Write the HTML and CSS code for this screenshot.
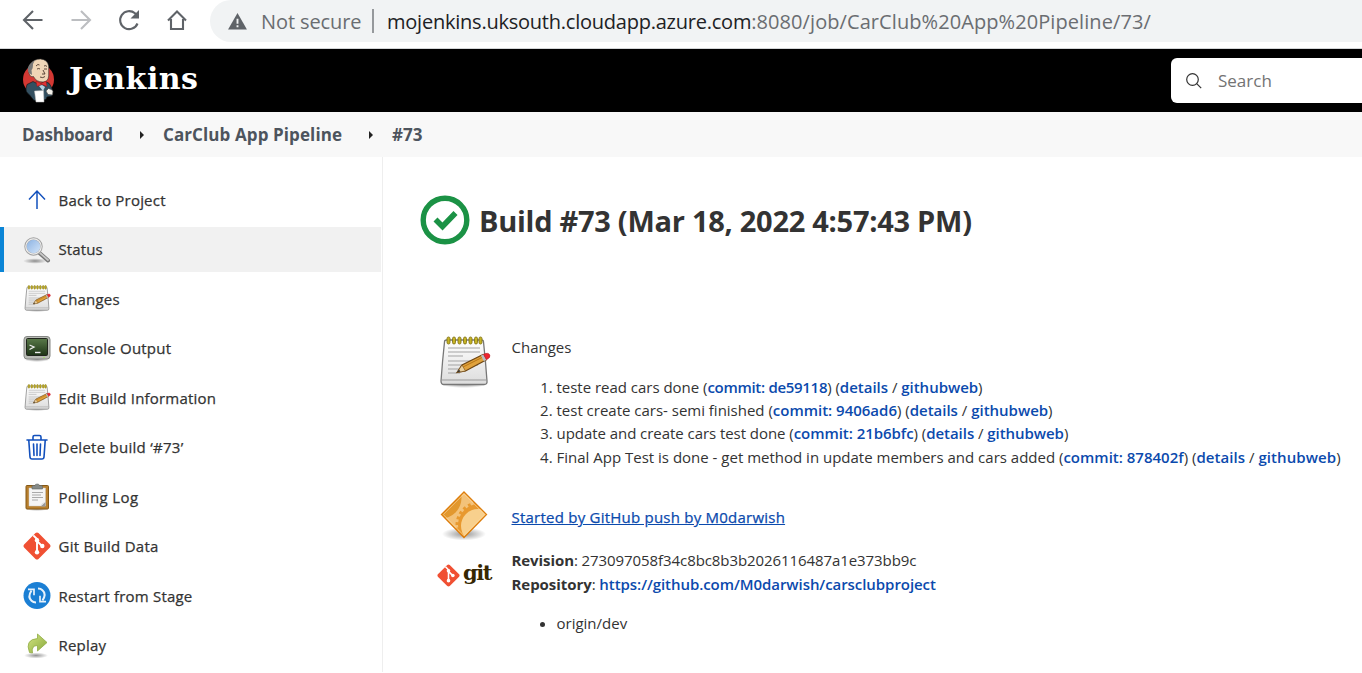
FILE: index.html
```html
<!DOCTYPE html>
<html lang="en">
<head>
<meta charset="utf-8">
<title>CarClub App Pipeline #73 [Jenkins]</title>
<link rel="stylesheet" href="styles.css">
</head>
<body>
<svg class="defs" width="0" height="0" aria-hidden="true">
  <defs>
    <linearGradient id="paper" x1="0" y1="0" x2="0" y2="1"><stop offset="0" stop-color="#fff"/><stop offset="1" stop-color="#dcdcdc"/></linearGradient>
    <linearGradient id="glass" x1="0" y1="0" x2="1" y2="1"><stop offset="0" stop-color="#86aee0"/><stop offset="1" stop-color="#d9e9fb"/></linearGradient>
    <linearGradient id="screen" x1="0" y1="0" x2="0" y2="1"><stop offset="0" stop-color="#5a7a4a"/><stop offset="1" stop-color="#1d3316"/></linearGradient>
    <linearGradient id="leaf" x1="0" y1="0" x2="1" y2="1"><stop offset="0" stop-color="#d5e583"/><stop offset="1" stop-color="#86a83a"/></linearGradient>
    <radialGradient id="shade"><stop offset="0" stop-color="#000" stop-opacity=".42"/><stop offset="1" stop-color="#000" stop-opacity="0"/></radialGradient>
    <clipPath id="diamond"><path d="M25 1l22.500 22.500L25 46.500 2.500 23.500z"/></clipPath>
    <symbol id="notepad" viewBox="0 0 52 52">
      <ellipse cx="25" cy="48" rx="24" ry="4" fill="url(#shade)"/>
      <path d="M5.500 6Q3.500 24 2 45q0 3.500 3 3.500h40q3.500 0 3-3.500Q46.500 24 44.500 6q0-2-2-2h-35q-2 0-2 2z" fill="url(#paper)" stroke="#777" stroke-width="1.300"/>
      <path d="M3 44h44" stroke="#999"/>
      <path d="M9 12h32M9 16h32M9 20h15M9 25h32M9 29h30M9 33h20M9 37h12" stroke="#a3a3a3"/>
      <g fill="#c6b323" stroke="#85761a" stroke-width=".9"><rect x="8" y="1" width="3" height="7" rx="1.500"/><rect x="13.500" y="1" width="3" height="7" rx="1.500"/><rect x="19" y="1" width="3" height="7" rx="1.500"/><rect x="24.500" y="1" width="3" height="7" rx="1.500"/><rect x="30" y="1" width="3" height="7" rx="1.500"/><rect x="35.500" y="1" width="3" height="7" rx="1.500"/><rect x="40" y="1" width="3" height="7" rx="1.500"/></g>
      <path d="M18 36.500l5-7.500 21-10.500 3 5.500-20.500 11z" fill="#e0a23c" stroke="#6d4512" stroke-width="1.200"/>
      <path d="M18 36.500l5-7.500 3.500 6z" fill="#e9cf9d" stroke="#6d4512" stroke-width=".6"/><path d="M18 36.500l2-3 1.500 2z" fill="#333"/>
      <path d="M24 31l21-10.500" stroke="#b97715"/>
      <path d="M42 19.500l2.500-1.200 3 5.500-2.700 1.400z" fill="#b9bec4"/>
      <path d="M44.500 18.300q5-2.300 6.300.8 1 2.500-3.300 4.700z" fill="#ee2430" stroke="#b31a20" stroke-width=".6"/>
    </symbol>
    <symbol id="git-mark" viewBox="0 0 28 28">
      <path d="M14 .5q.9 0 1.500.6L26.900 12.500q1.200 1.500 0 3L15.500 26.900q-1.500 1.200-3 0L1.100 15.500q-1.200-1.500 0-3L12.500 1.100Q13.100.5 14 .5z" fill="#f05033"/>
      <path d="M10.300 3.300L14 7v14M14 9l5.500 5.500" fill="none" stroke="#fff" stroke-width="1.900"/>
      <circle cx="14" cy="8.300" r="2.200" fill="#fff"/><circle cx="19.300" cy="14" r="2.200" fill="#fff"/><circle cx="14" cy="20.300" r="2.200" fill="#fff"/>
    </symbol>
  </defs>
</svg>

<div class="toolbar">
  <svg class="nav-icon" viewBox="0 0 24 24"><path d="M21.500 12H3M12 3l-9 9 9 9"/></svg>
  <svg class="nav-icon nav-icon--off" viewBox="0 0 24 24"><path d="M2.500 12H21M12 3l9 9-9 9"/></svg>
  <svg class="nav-icon" viewBox="0 0 24 24"><path d="M20.500 15.500A9 9 0 1 1 18 5.300L20 7.500"/><path class="solid" d="M22 2v8.500h-8.500z"/></svg>
  <svg class="nav-icon" viewBox="0 0 24 24"><path d="M3 12.500L12 3.500l9 9M6 11v10h12V11"/></svg>
  <div class="omnibox">
    <svg class="warn" viewBox="0 0 20 18"><path d="M10 0l10 17.500H0z" fill="#5f6368"/><path d="M10 6v5.500M10 13v2.200" stroke="#f1f3f4" stroke-width="2"/></svg>
    <span class="insecure">Not secure</span>
    <span class="bar"></span>
    <span class="url"><span class="host">mojenkins.uksouth.cloudapp.azure.com</span><span class="path">:8080/job/CarClub%20App%20Pipeline/73/</span></span>
  </div>
</div>

<header class="header">
  <svg class="butler" viewBox="0 0 33 45">
    <circle cx="16.500" cy="21.500" r="15.500" fill="#d33833"/>
    <path d="M5 26.500l6-3 6 3 6-3q5 1 6 5l2 4.500-1 5-5 1-1 2.500-12 1-4-5q-5-4-4-7z" fill="#335061" stroke="#111" stroke-width=".6"/>
    <path d="M7 15Q5 10 8.500 6 12 1 18.500 1q7 .5 8.200 7v10q-.7 6-5.700 6-7 0-9.500-5.500-3.500 1-4.500-3.500z" fill="#f0d6b7" stroke="#333" stroke-width=".6"/>
    <path d="M7 15Q4 9 9 5l4-3-2 4q0 5-1.500 6L10 17z" fill="#777"/>
    <path d="M14 8q2-2.500 3.500-1M22 8q2-1 3 .5M15 11q2-1 3 0M22 11h3M21 12l2 4h-3M18 19q3 1.500 5-.5" fill="none" stroke="#49352a" stroke-width=".9"/>
    <path d="M14 23l5 2.500 5-2.500 1 5.500-5-2-5 2z" fill="#e33234" stroke="#801414" stroke-width=".4"/>
    <path d="M17 28l3-1 3 2-2 4z" fill="#b9d3e2"/>
    <path d="M12.500 33l9-.5.5 11.500h-8z" fill="#fff" stroke="#bbb" stroke-width=".5"/>
    <path d="M24 33l2.500-2.500q3 .5 4.500 2.500l-.5 4-4.500-.5z" fill="#f3f0e9" stroke="#444" stroke-width=".6"/>
  </svg>
  <span class="wordmark">Jenkins</span>
  <div class="search">
    <svg viewBox="0 0 16 16"><circle cx="6.500" cy="6.500" r="5.800"/><path d="M10.700 10.700l4.500 4.500"/></svg>
    <span>Search</span>
  </div>
</header>

<nav class="crumbs">
  <a class="c1">Dashboard</a><i class="caret"></i><a class="c2">CarClub App Pipeline</a><i class="caret"></i><a class="c3">#73</a>
</nav>

<div class="page">
  <aside class="side">
    <a class="task"><svg viewBox="0 0 28 28"><path d="M14 23V5M6 13.500L14 5l8 8.500" fill="none" stroke="#1250bd" stroke-width="1.500"/></svg><span class="t1">Back to Project</span></a>
    <a class="task task--on"><svg viewBox="0 0 28 28"><ellipse cx="12" cy="25" rx="12" ry="2.800" fill="url(#shade)"/><path d="M16.500 17l8.500 7.500" stroke="#777" stroke-width="4" stroke-linecap="round"/><path d="M17 17l8 7" stroke="#c7c7c7" stroke-width="1.800" stroke-linecap="round"/><circle cx="10.500" cy="10.500" r="8" fill="url(#glass)" stroke="#a0a0a0" stroke-width="2.400"/><circle cx="10.500" cy="10.500" r="7.700" fill="none" stroke="#eee" stroke-width="1.200"/></svg><span class="t2">Status</span></a>
    <a class="task"><svg viewBox="0 0 28 28"><use href="#notepad" x="1" y="0" width="27" height="27"/></svg><span class="t3">Changes</span></a>
    <a class="task"><svg viewBox="0 0 28 28"><ellipse cx="14" cy="25.500" rx="13" ry="2.500" fill="url(#shade)"/><rect x="1" y="2.500" width="26" height="22.500" rx="3" fill="#b9bbb5" stroke="#858784"/><rect x="3.500" y="4.500" width="21" height="17" rx="1" fill="url(#screen)" stroke="#20251d"/><path d="M6.500 11l4.500 2-4.500 2.500" fill="none" stroke="#eee" stroke-width="1.300"/><path d="M12 18.500h5.500" stroke="#eee" stroke-width="1.400"/><circle cx="21" cy="23.500" r=".8" fill="#9be35d"/></svg><span class="t4">Console Output</span></a>
    <a class="task"><svg viewBox="0 0 28 28"><use href="#notepad" x="1" y="0" width="27" height="27"/></svg><span class="t5">Edit Build Information</span></a>
    <a class="task"><svg viewBox="0 0 28 28"><path d="M4 7h20M10 6.500V4q0-1.500 1.500-1.500h5Q18 2.500 18 4v2.500M5.800 7.500L7 24q.2 2 2 2h10q1.800 0 2-2l1.200-16.500M10.500 11l.5 11.500M14 11v11.500M17.500 11l-.5 11.500" fill="none" stroke="#1250bd" stroke-width="1.600" stroke-linecap="round"/></svg><span class="t6">Delete build ‘#73’</span></a>
    <a class="task"><svg viewBox="0 0 28 28"><ellipse cx="14" cy="26" rx="12" ry="2" fill="url(#shade)"/><rect x="3" y="2.500" width="22.500" height="23.500" rx="1" fill="#b87f2d" stroke="#845817"/><path d="M6 5h16.500v18H6z" fill="#f5f5f5" stroke="#ccc" stroke-width=".5"/><path d="M22.500 19l-5 4.500h5z" fill="#999"/><path d="M17.500 23q1-3.500 5-4l-5 4z" fill="#ddd"/><path d="M9 9.500h11M9 12h9M9 14.500h11M9 17h6" stroke="#aaa"/><path d="M9 6V3.500q0-1 1.500-1H12q0-1.500 2.200-1.500t2.300 1.500H18q1.500 0 1.500 1V6z" fill="#858a88" stroke="#606563" stroke-width=".6"/></svg><span class="t7">Polling Log</span></a>
    <a class="task"><svg viewBox="0 0 28 28"><use href="#git-mark" width="28" height="28"/></svg><span class="t8">Git Build Data</span></a>
    <a class="task"><svg viewBox="0 0 28 28"><circle cx="14" cy="13.500" r="13.500" fill="#1b7fd4"/><path d="M8.500 8.500Q4.300 15 8.500 18.800q1.700 1.700 4.500 1.700M19.500 18.500q4.200-6.500 0-10.300-1.700-1.700-4.500-1.700" fill="none" stroke="#e8f2fb" stroke-width="2"/><path d="M5 7.300h6v6M23 19.700h-6v-6" fill="none" stroke="#e8f2fb" stroke-width="1.700"/></svg><span class="t9">Restart from Stage</span></a>
    <a class="task"><svg viewBox="0 0 28 28"><ellipse cx="13" cy="24.500" rx="12" ry="3" fill="url(#shade)"/><path d="M6.500 21.500Q1.500 8.500 14.500 7.500V3l9.500 8.500-9.500 8.500V14.500Q8 14.500 9.500 22z" fill="url(#leaf)" stroke="#91ac42" stroke-width=".8"/></svg><span class="t10">Replay</span></a>
  </aside>

  <main class="main">
    <h1 class="title">
      <svg viewBox="0 0 50 50"><circle cx="25" cy="25" r="21.800" fill="none" stroke="#1b9245" stroke-width="5.400"/><path d="M15.500 24.500l7 7L35.500 18" fill="none" stroke="#1b9245" stroke-width="5.600"/></svg>
      <span>Build #73 (Mar 18, 2022 4:57:43 PM)</span>
    </h1>
    <section class="row row--changes">
      <svg class="pad" viewBox="0 0 52 52"><use href="#notepad" width="52" height="52"/></svg>
      <div>
        <p class="label">Changes</p>
        <ol class="log">
          <li class="l1">teste read cars done (<a class="sha">commit: de59118</a>) (<a>details</a> / <a>githubweb</a>)</li>
          <li class="l2">test create cars- semi finished (<a class="sha">commit: 9406ad6</a>) (<a>details</a> / <a>githubweb</a>)</li>
          <li class="l3">update and create cars test done (<a class="sha">commit: 21b6bfc</a>) (<a>details</a> / <a>githubweb</a>)</li>
          <li class="l4">Final App Test is done - get method in update members and cars added (<a class="sha">commit: 878402f</a>) (<a>details</a> / <a>githubweb</a>)</li>
        </ol>
      </div>
    </section>
    <section class="row row--cause">
      <svg class="cause" viewBox="0 0 50 50"><ellipse cx="25" cy="43" rx="22" ry="6.500" fill="url(#shade)"/>
        <g clip-path="url(#diamond)">
          <path d="M0 0h50v48H0z" fill="#f3c27a"/>
          <circle cx="2" cy="7" r="20.500" fill="#e2982f"/>
          <circle cx="40" cy="34" r="21" fill="#e8992f"/>
          <circle cx="40" cy="34" r="21.500" fill="none" stroke="#e8992f" stroke-width="4" stroke-dasharray="2.800 2.800"/>
          <circle cx="39" cy="35" r="17" fill="#f8d08d"/>
        </g>
        <path d="M25 1l22.500 22.500L25 46.500 2.500 23.500z" fill="none" stroke="#dd7d0c" stroke-width="1.300"/><path d="M25 2.800L45.700 23.500 25 44.700 4.300 23.500z" fill="none" stroke="#ffdda6" stroke-opacity=".6"/></svg>
      <a class="cause-link">Started by GitHub push by M0darwish</a>
    </section>
    <section class="row row--git">
      <div class="git-logo"><svg viewBox="0 0 28 28"><use href="#git-mark" width="28" height="28"/></svg><b>git</b></div>
      <div>
        <p class="rev"><b>Revision</b>: 273097058f34c8bc8b3b2026116487a1e373bb9c</p>
        <p class="repo"><b>Repository</b>: <a>https://github.com/M0darwish/carsclubproject</a></p>
        <ul class="branches"><li>origin/dev</li></ul>
      </div>
    </section>
  </main>
</div>
</body>
</html>
```
FILE: styles.css
```css
* { box-sizing: border-box; }
body { margin: 0; height: 673px; overflow: hidden; background: #fff; color: #333; font-family: "Open Sans", "Noto Sans", sans-serif; font-size: 15px; white-space: nowrap; }
p, h1, ol, ul { margin: 0; }
svg { display: block; flex: none; }
.defs { position: absolute; }

.toolbar { display: flex; height: 49px; padding-left: 21px; border-bottom: 1px solid #d4d6d8; }
.nav-icon { width: 24px; height: 24px; margin: 8px 24px 0 0; fill: none; stroke: #5f6368; stroke-width: 2.1; }
.nav-icon .solid { fill: #5f6368; stroke: none; }
.nav-icon--off { stroke: #bcbec1; }
.omnibox { display: flex; align-items: center; flex: 1; height: 42px; margin-left: -3px; padding-left: 18px; background: #f1f3f4; border-radius: 21px 0 0 21px; font-size: 20px; color: #6a6d71; }
.warn { width: 19px; height: 17px; }
.insecure { margin-left: 14px; width: 100px; letter-spacing: -.1px; }
.bar { width: 2px; height: 24px; margin: 0 13px 0 11px; background: #96999c; }
.host { color: #202124; letter-spacing: -.23px; }
.path { letter-spacing: .08px; }

.header { display: flex; align-items: center; height: 63px; padding-left: 22px; background: #000; }
.butler { width: 33px; height: 45px; }
.wordmark { margin-left: 14px; padding-bottom: 3px; color: #fff; font: bold 30px/40px "DejaVu Serif", serif; letter-spacing: .5px; flex: 1; }
.search { display: flex; align-items: center; width: 191px; height: 45px; padding-left: 15px; background: #fff; border-radius: 6px 0 0 6px; font-size: 17px; color: #737373; }
.search svg { width: 16px; height: 16px; margin-right: 16px; fill: none; stroke: #333; stroke-width: 1.2; }

.crumbs { display: flex; align-items: center; height: 45px; padding-left: 22px; background: #f8f8f8; color: #4d545d; font-size: 17px; font-weight: 700; }
.c1 { width: 118px; letter-spacing: -.2px; }
.c2 { width: 206px; letter-spacing: .1px; }
.c3 { letter-spacing: 0; }
.caret { width: 4px; margin-right: 19px; border: solid transparent; border-width: 4px 0 4px 4px; border-left-color: #222; }

.page { display: flex; height: 515px; }
.side { display: flex; flex-direction: column; gap: 4.45px; width: 383px; padding: 20.600px 1px 0 0; border-right: 1px solid #eee; }
.task { display: flex; align-items: center; height: 45px; flex: none; padding-left: 22.500px; letter-spacing: .2px; -webkit-text-stroke: .25px; }
.task svg { width: 28px; height: 28px; margin-right: 8px; }
.task--on { padding-left: 18.500px; border-left: 4px solid #0b85d6; background: #f1f1f1; }
.t2 { padding-bottom: 1px; letter-spacing: .1px; }
.t6, .t8 { letter-spacing: .27px; }
.t7 { letter-spacing: .4px; }

.main { padding: 38px 0 0 36.500px; }
.title { display: flex; align-items: center; height: 50px; font-size: 29px; font-weight: 700; line-height: 50px; letter-spacing: -.27px; }
.title svg { width: 50px; height: 50px; margin-right: 9.500px; }
.title span { padding-top: 2px; }
.row { display: flex; }
.row a { color: #0b4aad; font-weight: 600; }
.row--changes { margin-top: 90px; padding-left: 19.500px; height: 155px; }
.pad { width: 52px; height: 52px; margin: 1px 20.500px 0 0; }
.label { line-height: 24px; }
.log { margin-top: 16.500px; padding-left: 45px; line-height: 23.400px; }
.l1 { letter-spacing: -.02px; }
.l1 .sha { letter-spacing: -.3px; }
.l2 { letter-spacing: -.01px; }
.l3 { letter-spacing: -.05px; }
.l4 .sha ~ a { letter-spacing: .07px; }
.row--cause { padding-left: 19.500px; height: 58px; }
.cause { width: 50px; height: 52px; margin-right: 22.500px; }
.row .cause-link { line-height: 54px; font-weight: 400; letter-spacing: .23px; text-decoration: underline; -webkit-text-stroke: .25px; }
.row--git { padding-left: 17.500px; line-height: 24px; }
.rev { letter-spacing: -.08px; }
.repo { letter-spacing: -.06px; }
.git-logo { display: flex; width: 74.500px; height: 50px; padding-top: 4px; align-items: center; }
.git-logo svg { width: 23px; height: 23px; }
.git-logo b { margin-left: 3px; padding-bottom: 5px; color: #362701; font: bold 21px/26px "DejaVu Serif", serif; letter-spacing: -1.500px; }
.branches { margin-top: 15px; padding-left: 45px; }
```
